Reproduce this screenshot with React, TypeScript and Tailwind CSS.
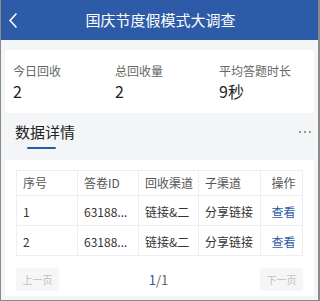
import React from 'react';

const FONT = { fontFamily: '"Noto Sans CJK SC", "Noto Sans", sans-serif' };

const stats = [
  { label: '今日回收', value: '2' },
  { label: '总回收量', value: '2' },
  { label: '平均答题时长', value: '9秒' },
];

const rows = [
  { no: '1', id: '63188...', channel: '链接&二', sub: '分享链接' },
  { no: '2', id: '63188...', channel: '链接&二', sub: '分享链接' },
];

export default function App() {
  return (
    <div
      className="w-[320px] h-[301px] overflow-hidden bg-[#f4f5f7] border-l border-r-2 border-b border-[#8a8a8a] flex flex-col"
      style={FONT}
    >
      {/* header */}
      <div className="h-10 shrink-0 bg-[#2d5ba8] relative flex items-center justify-center">
        <svg className="absolute left-[7px] top-[13px]" width="10" height="15" viewBox="0 0 10 15">
          <polyline points="8,1 2,7.5 8,14" fill="none" stroke="#fff" strokeWidth="1.6" strokeLinejoin="round" strokeLinecap="round" />
        </svg>
        <span className="text-white text-[15px] leading-[22px] pl-[2px]">国庆节度假模式大调查</span>
      </div>

      {/* stats */}
      <div className="mx-1 mt-[10px] h-[63px] bg-white rounded-[3px] px-2 pt-3 grid grid-cols-[102px_104px_1fr]">
        {stats.map((s) => (
          <div key={s.label}>
            <div className="text-[12px] leading-[18px] text-[#666]">{s.label}</div>
            <div className="text-[16px] leading-[22px] text-[#222]">{s.value}</div>
          </div>
        ))}
      </div>

      {/* section title */}
      <div className="flex items-start justify-between pl-[14px] pr-[7px] mt-2">
        <div className="flex flex-col">
          <span className="text-[15px] leading-[22px] text-[#222]">数据详情</span>
          <span className="ml-3 mt-[4px] w-[29px] h-[2px] bg-[#2d5ba8] rounded-full" />
        </div>
        <div className="flex gap-[3px] mt-[10px]">
          <span className="w-[2px] h-[2px] bg-[#777] rounded-full" />
          <span className="w-[2px] h-[2px] bg-[#777] rounded-full" />
          <span className="w-[2px] h-[2px] bg-[#777] rounded-full" />
        </div>
      </div>

      {/* table card */}
      <div className="mx-1 mt-[11px] h-[136px] bg-white rounded-[3px] px-[11px] pt-[10px]">
        <div className="border border-[#eceef2] text-[12px]">
          <div className="grid grid-cols-[61px_61px_60px_62px_1fr] h-[24px] items-center text-[#555]">
            <div className="pl-[6px] border-r border-[#eceef2] h-full flex items-center">序号</div>
            <div className="pl-[6px] border-r border-[#eceef2] h-full flex items-center">答卷ID</div>
            <div className="pl-[6px] border-r border-[#eceef2] h-full flex items-center">回收渠道</div>
            <div className="pl-[6px] border-r border-[#eceef2] h-full flex items-center">子渠道</div>
            <div className="h-full flex items-center justify-center pl-[4px]">操作</div>
          </div>
          {rows.map((r) => (
            <div
              key={r.no}
              className="grid grid-cols-[61px_61px_60px_62px_1fr] h-[30px] items-center border-t border-[#eceef2] text-[#333]"
            >
              <div className="pl-[6px] pt-[3px] border-r border-[#eceef2] h-full flex items-center">{r.no}</div>
              <div className="pl-[6px] pt-[3px] border-r border-[#eceef2] h-full flex items-center whitespace-nowrap">{r.id}</div>
              <div className="pl-[6px] pt-[3px] border-r border-[#eceef2] h-full flex items-center whitespace-nowrap">{r.channel}</div>
              <div className="pl-[6px] pt-[3px] border-r border-[#eceef2] h-full flex items-center whitespace-nowrap">{r.sub}</div>
              <div className="pt-[3px] h-full flex items-center justify-center pl-[4px] text-[#2d5ba8]">查看</div>
            </div>
          ))}
        </div>

        {/* pagination */}
        <div className="flex items-center justify-between mt-[12px]">
          <span className="w-[43px] h-[23px] bg-[#f6f6f6] rounded-[2px] text-[10px] text-[#c0c0c0] flex items-center justify-center">
            上一页
          </span>
          <span className="text-[13px] text-[#666] pr-[2px]">
            <span className="text-[#2d5ba8]">1</span>/1
          </span>
          <span className="w-[43px] h-[23px] bg-[#f6f6f6] rounded-[2px] text-[10px] text-[#c0c0c0] flex items-center justify-center">
            下一页
          </span>
        </div>
      </div>
    </div>
  );
}
